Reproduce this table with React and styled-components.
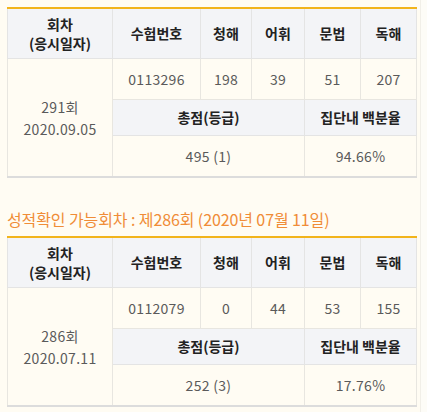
import React from "react";
import styled, { createGlobalStyle } from "styled-components";

const GlobalStyle = createGlobalStyle`
  html, body {
    margin: 0;
    padding: 0;
    background: #fffcf3;
    font-family: "Noto Sans CJK KR", "Noto Sans", sans-serif;
  }
`;

const Page = styled.div`
  display: flex;
  width: 427px;
  height: 412px;
  overflow: hidden;
`;

const Content = styled.div`
  width: 409px;
  padding: 7px 0 0 7px;
`;

const ScrollStrip = styled.div`
  margin-left: 4px;
  width: 7px;
  border-left: 1px solid #f1efe8;
  background: #fdfcf7;
`;

const Table = styled.table`
  width: 409px;
  border-collapse: collapse;
  table-layout: fixed;
  border-top: 2px solid #f2b41b;
  border-bottom: 2px solid #dcdcdc;
  border-left: 1px solid #e4e4e4;
  border-right: 1px solid #e4e4e4;
  color: #5a5a5a;
  font-size: 14px;
`;

const Th = styled.th`
  height: ${(p) => p.$h || 49}px;
  padding: 0;
  background: #f3f4f7;
  color: #222;
  font-weight: 700;
  font-size: 14px;
  line-height: 19px;
  border: 1px solid #e4e4e4;
  text-align: center;
`;

const Td = styled.td`
  height: ${(p) => p.$h || 40}px;
  padding: 0;
  background: #fffcf3;
  border: 1px solid #e8e6e0;
  text-align: center;
  line-height: 22px;
  letter-spacing: 0.3px;
`;

const Title = styled.h3`
  margin: 30px 0 0;
  height: 28px;
  font-size: 16px;
  font-weight: 400;
  color: #f08c37;
  line-height: 22px;
  letter-spacing: -0.1px;
`;

const results = [
  {
    round: "291회",
    date: "2020.09.05",
    number: "0113296",
    scores: [198, 39, 51, 207],
    total: "495 (1)",
    percent: "94.66%",
  },
  {
    round: "286회",
    date: "2020.07.11",
    number: "0112079",
    scores: [0, 44, 53, 155],
    total: "252 (3)",
    percent: "17.76%",
  },
];

function ScoreTable({ data }) {
  return (
    <Table>
      <colgroup>
        <col style={{ width: 105 }} />
        <col style={{ width: 88 }} />
        <col style={{ width: 51 }} />
        <col style={{ width: 53 }} />
        <col style={{ width: 56 }} />
        <col style={{ width: 56 }} />
      </colgroup>
      <thead>
        <tr>
          <Th>
            회차
            <br />
            (응시일자)
          </Th>
          <Th>수험번호</Th>
          <Th>청해</Th>
          <Th>어휘</Th>
          <Th>문법</Th>
          <Th>독해</Th>
        </tr>
      </thead>
      <tbody>
        <tr>
          <Td rowSpan={4}>
            {data.round}
            <br />
            {data.date}
          </Td>
          <Td>{data.number}</Td>
          {data.scores.map((s, i) => (
            <Td key={i}>{s}</Td>
          ))}
        </tr>
        <tr>
          <Th $h={35} colSpan={3}>
            총점(등급)
          </Th>
          <Th $h={35} colSpan={2}>
            집단내 백분율
          </Th>
        </tr>
        <tr>
          <Td colSpan={3}>{data.total}</Td>
          <Td colSpan={2}>{data.percent}</Td>
        </tr>
      </tbody>
    </Table>
  );
}

export default function App() {
  return (
    <Page>
      <GlobalStyle />
      <Content>
        <ScoreTable data={results[0]} />
        <Title>성적확인 가능회차 : 제286회 (2020년 07월 11일)</Title>
        <ScoreTable data={results[1]} />
      </Content>
      <ScrollStrip />
    </Page>
  );
}
